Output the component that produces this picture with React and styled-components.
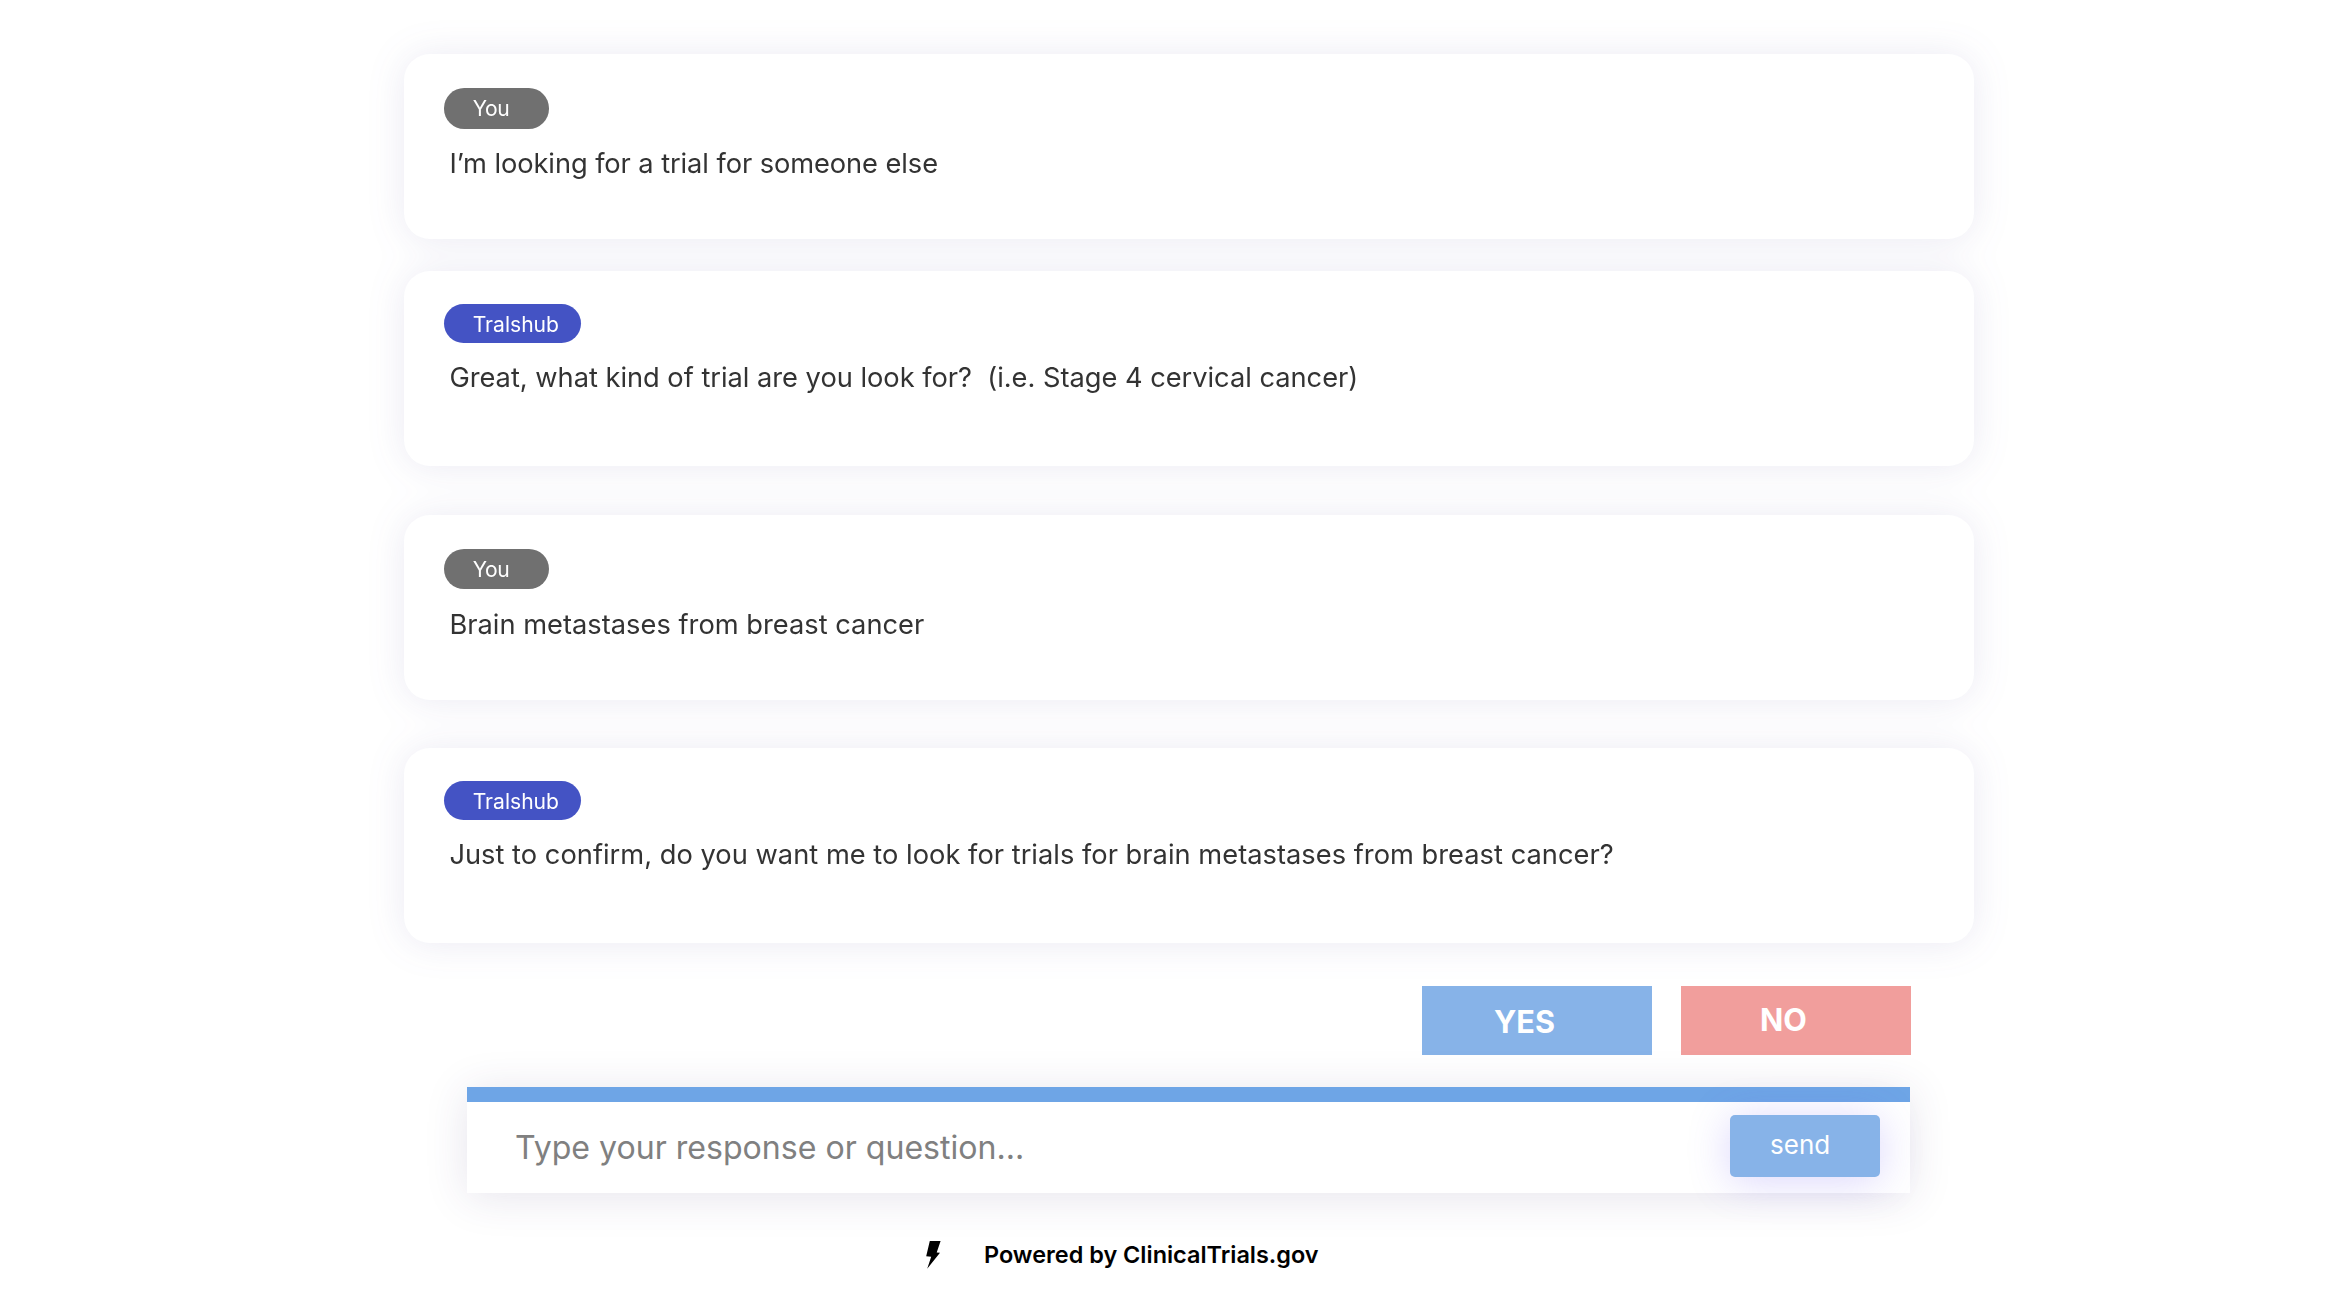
import React from "react";
import styled, { createGlobalStyle } from "styled-components";

const GlobalStyle = createGlobalStyle`
  * { box-sizing: border-box; }
  body {
    margin: 0;
    background: #fff;
    font-family: Inter, "Liberation Sans", sans-serif;
  }
`;

const Page = styled.main`
  width: 2352px;
  height: 1314px;
  overflow: hidden;
  display: flex;
  flex-direction: column;
  padding: 54px 378px 0 404px;
`;

const Thread = styled.section`
  display: flex;
  flex-direction: column;
  filter: drop-shadow(0 1px 18px rgba(70, 60, 150, 0.11));
`;

const Card = styled.article`
  height: ${(p) => p.$height}px;
  margin-bottom: ${(p) => p.$gap}px;
  padding: ${(p) => (p.$bot ? 33 : 34.3)}px 40px 0;
  border-radius: 26px;
  background: #fff;
  display: flex;
  flex-direction: column;
  align-items: flex-start;
`;

const Sender = styled.span`
  width: ${(p) => (p.$bot ? 137 : 104.6)}px;
  height: ${(p) => (p.$bot ? 39 : 40.3)}px;
  padding-left: 28.7px;
  border-radius: 20.2px;
  background: ${(p) => (p.$bot ? "#4453c4" : "#707070")};
  color: #fff;
  font-size: 21.1px;
  font-weight: 400;
  letter-spacing: ${(p) => (p.$bot ? 0 : -0.4)}px;
  line-height: 41.4px;
`;

const Message = styled.p`
  margin: ${(p) => (p.$bot ? 16.6 : 17.4)}px 0 0 5.4px;
  color: #333;
  font-size: 27.25px;
  font-weight: 400;
  letter-spacing: ${(p) => p.$tracking || 0}px;
  line-height: 36px;
  white-space: pre;
`;

const Choices = styled.div`
  display: flex;
  justify-content: flex-end;
  gap: 29.5px;
  margin: 43.4px 63px 0 0;
`;

const Choice = styled.button`
  width: 230px;
  height: 68.6px;
  border: 0;
  padding: ${(p) => p.$pad};
  background: ${(p) => p.$color};
  color: #fff;
  font: 700 30.6px/60px Inter, sans-serif;
  text-align: left;
`;

const Composer = styled.form`
  width: 1443px;
  height: 105.6px;
  margin: 32px 0 0 63px;
  border-top: 15px solid #6ea5e6;
  background: #fff;
  box-shadow: 0 4px 44px rgba(60, 50, 110, 0.13);
  display: flex;
  align-items: flex-start;
  justify-content: space-between;
  padding: 0 30px 0 48px;
`;

const Prompt = styled.span`
  color: #808080;
  font-size: 32.1px;
  font-weight: 400;
  line-height: 92px;
`;

const Send = styled.button`
  width: 150.5px;
  height: 62px;
  margin-top: 13px;
  border: 0;
  border-radius: 5px;
  padding: 0 0 2.5px 40.5px;
  background: #87b3e8;
  box-shadow: 0 4px 40px rgba(110, 90, 245, 0.25);
  color: #fff;
  font: 400 26px/40px Inter, sans-serif;
  text-align: left;
`;

const Footer = styled.footer`
  display: flex;
  align-items: center;
  gap: 43px;
  margin: 42.6px 0 0 522px;
  color: #000;
  font-size: 23.45px;
  font-weight: 600;
  line-height: 40px;
`;

const BoltIcon = styled.svg`
  margin-bottom: 1px;
`;

const Bolt = () => (
  <BoltIcon width="15" height="28" viewBox="0 0 15 28">
    <polygon points="3.8,0 14.6,0 10.7,11.4 14,11.8 1.2,27.8 5.2,15.8 0.2,15.2" fill="#000" />
  </BoltIcon>
);

const messages = [
  { text: "I’m looking for a trial for someone else", height: 185, gap: 32, tracking: -0.08 },
  {
    bot: true,
    text: "Great, what kind of trial are you look for?  (i.e. Stage 4 cervical cancer)",
    height: 195,
    gap: 48.6,
    tracking: -0.02,
  },
  { text: "Brain metastases from breast cancer", height: 185.4, gap: 48, tracking: 0.01 },
  {
    bot: true,
    text: "Just to confirm, do you want me to look for trials for brain metastases from breast cancer?",
    height: 195,
    gap: 0,
    tracking: 0.02,
  },
];

export default function App() {
  return (
    <Page>
      <GlobalStyle />
      <Thread>
        {messages.map((m) => (
          <Card key={m.text} $bot={m.bot} $height={m.height} $gap={m.gap}>
            <Sender $bot={m.bot}>{m.bot ? "Tralshub" : "You"}</Sender>
            <Message $bot={m.bot} $tracking={m.tracking}>{m.text}</Message>
          </Card>
        ))}
      </Thread>
      <Choices>
        <Choice type="button" $color="#87b3e8" $pad="3.5px 0 0 72.5px">YES</Choice>
        <Choice type="button" $color="#f19e9c" $pad="0 0 1.5px 79px">NO</Choice>
      </Choices>
      <Composer>
        <Prompt>Type your response or question...</Prompt>
        <Send type="button">send</Send>
      </Composer>
      <Footer>
        <Bolt />
        <span>Powered by ClinicalTrials.gov</span>
      </Footer>
    </Page>
  );
}
